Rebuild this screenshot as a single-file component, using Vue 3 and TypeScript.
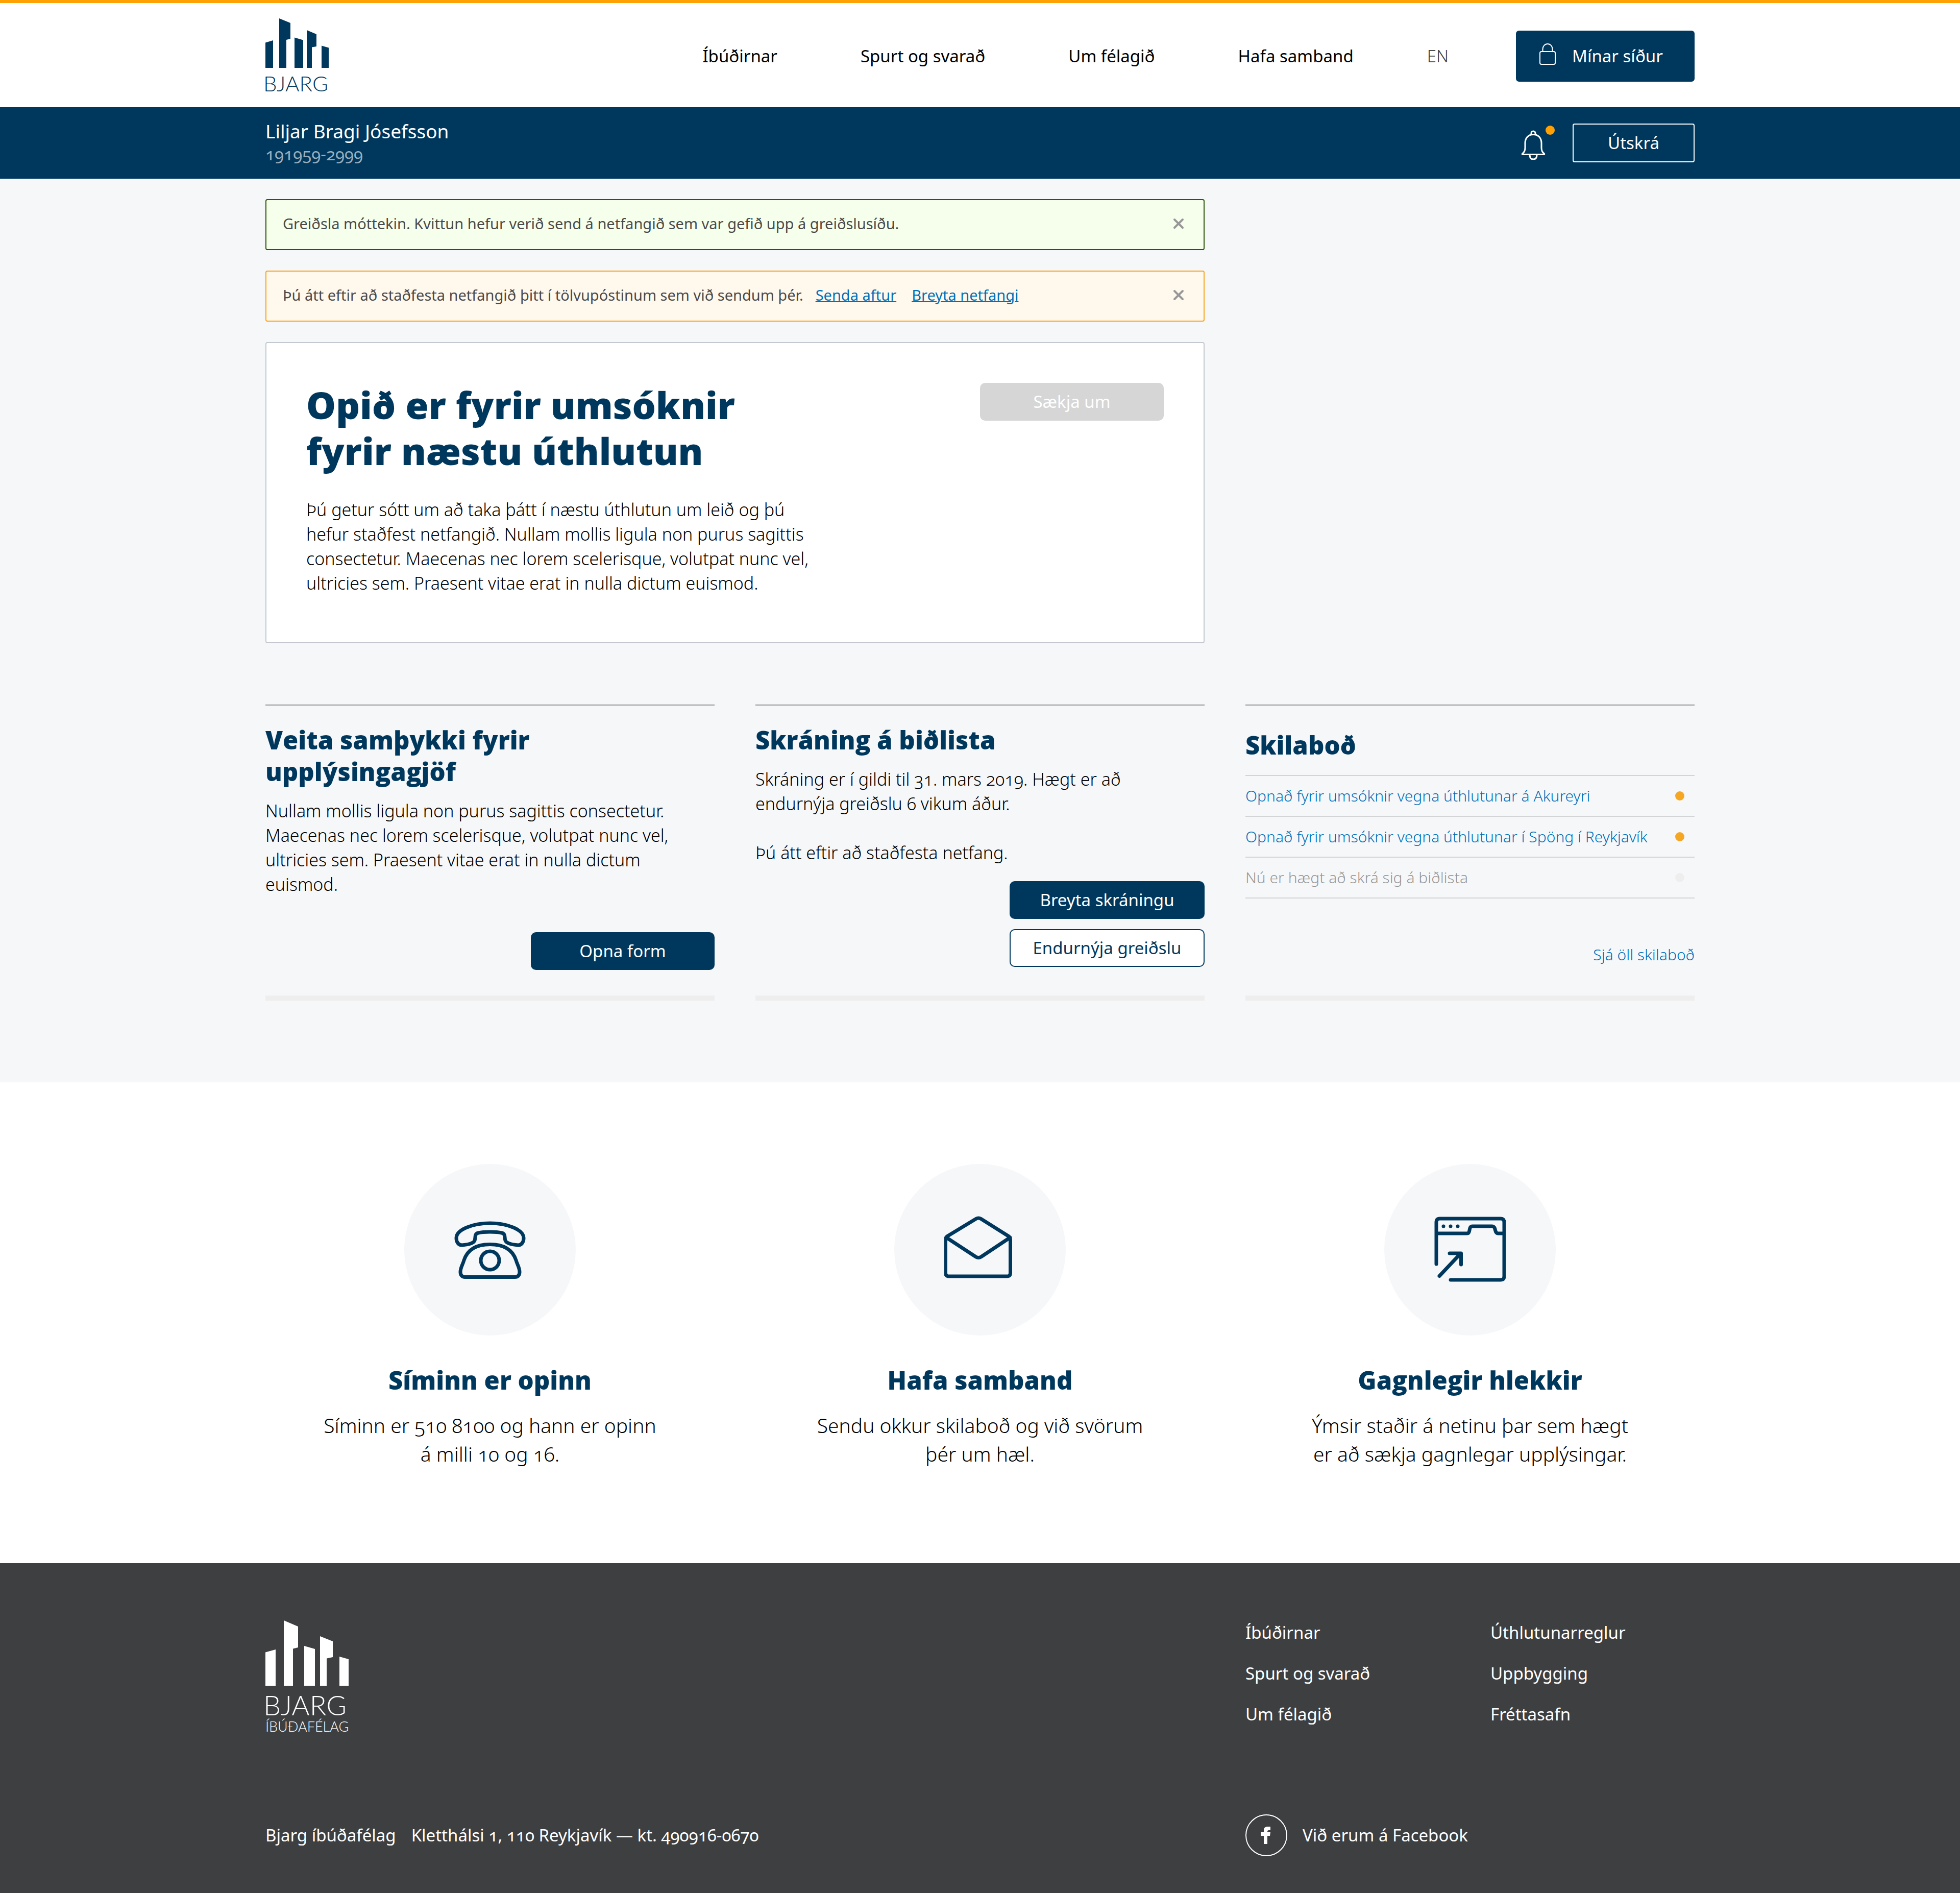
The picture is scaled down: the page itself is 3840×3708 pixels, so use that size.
<script setup lang="ts">
import { ref } from 'vue'

interface Message {
  text: string
  unread: boolean
}

const navLinks: string[] = ['Íbúðirnar', 'Spurt og svarað', 'Um félagið', 'Hafa samband']
const footerColumns: string[][] = [
  ['Íbúðirnar', 'Spurt og svarað', 'Um félagið'],
  ['Úthlutunarreglur', 'Uppbygging', 'Fréttasafn'],
]
const messages: Message[] = [
  { text: 'Opnað fyrir umsóknir vegna úthlutunar á Akureyri', unread: true },
  { text: 'Opnað fyrir umsóknir vegna úthlutunar í Spöng í Reykjavík', unread: true },
  { text: 'Nú er hægt að skrá sig á biðlista', unread: false },
]
const showReceipt = ref(true)
const showConfirm = ref(true)
</script>

<template>
  <div class="page">
    <header class="site-header">
      <div class="wrap header-row">
        <a href="#" class="logo">
          <svg class="logo-mark" viewBox="0 0 124 97" aria-hidden="true">
            <path d="M0 47.500 15 43v54H0zM27 0l22 9v31l-8 2v55H27zM57 37.500l17 5V97H57zM81 23l19 8v24l-9 1.500V97H81zM110 53.500l14 4V97h-14z" />
          </svg>
          <span class="logo-name">BJARG</span>
        </a>
        <nav class="main-nav">
          <a v-for="link in navLinks" :key="link" href="#">{{ link }}</a>
        </nav>
        <a href="#" class="lang">EN</a>
        <button type="button" class="my-pages">
          <svg class="lock" viewBox="0 0 32 42" aria-hidden="true">
            <path d="M6.500 16v-5a9.500 10 0 0 1 19 0v5" />
            <rect x="1" y="16" width="30" height="25" rx="3" />
          </svg>
          Mínar síður
        </button>
      </div>
    </header>

    <div class="user-bar">
      <div class="wrap user-row">
        <div class="user">
          <div class="user-name">Liljar Bragi Jósefsson</div>
          <div class="user-id">191959-2999</div>
        </div>
        <button type="button" class="bell" aria-label="Tilkynningar">
          <svg viewBox="0 0 48 58" aria-hidden="true">
            <path d="M20 9V6a4 4 0 0 1 8 0v3" />
            <path d="M24 8.500c-10 0-16 7-16 17v9c0 6-2 9-5 11-1 1-1 2 0 2h42c1 0 1-1 0-2-3-2-5-5-5-11v-9c0-10-6-17-16-17z" />
            <path d="M17 48c0 5 2 9 7 9s7-4 7-9" />
          </svg>
          <span class="bell-dot"></span>
        </button>
        <button type="button" class="logout">Útskrá</button>
      </div>
    </div>

    <main class="dashboard">
      <div class="wrap">
        <div class="lead">
          <div v-if="showReceipt" class="alert alert-success">
            <p>Greiðsla móttekin. Kvittun hefur verið send á netfangið sem var gefið upp á greiðslusíðu.</p>
            <button type="button" class="close" aria-label="Loka" @click="showReceipt = false">
              <svg viewBox="0 0 22 22" aria-hidden="true"><path d="M3 3l16 16M19 3L3 19" /></svg>
            </button>
          </div>
          <div v-if="showConfirm" class="alert alert-warning">
            <p>Þú átt eftir að staðfesta netfangið þitt í tölvupóstinum sem við sendum þér.</p>
            <a href="#">Senda aftur</a>
            <a href="#">Breyta netfangi</a>
            <button type="button" class="close" aria-label="Loka" @click="showConfirm = false">
              <svg viewBox="0 0 22 22" aria-hidden="true"><path d="M3 3l16 16M19 3L3 19" /></svg>
            </button>
          </div>
          <section class="apply">
            <div>
              <h1>Opið er fyrir umsóknir<br />fyrir næstu úthlutun</h1>
              <p>
                Þú getur sótt um að taka þátt í næstu úthlutun um leið og þú<br />
                hefur staðfest netfangið. Nullam mollis ligula non purus sagittis<br />
                consectetur. Maecenas nec lorem scelerisque, volutpat nunc vel,<br />
                ultricies sem. Praesent vitae erat in nulla dictum euismod.
              </p>
            </div>
            <button type="button" class="btn btn-disabled" disabled>Sækja um</button>
          </section>
        </div>

        <div class="columns">
          <section class="panel panel-form">
            <h2>Veita samþykki fyrir<br />upplýsingagjöf</h2>
            <p>
              Nullam mollis ligula non purus sagittis consectetur.<br />
              Maecenas nec lorem scelerisque, volutpat nunc vel,<br />
              ultricies sem. Praesent vitae erat in nulla dictum<br />
              euismod.
            </p>
            <div class="actions">
              <button type="button" class="btn">Opna form</button>
            </div>
          </section>
          <section class="panel">
            <h2>Skráning á biðlista</h2>
            <p>
              Skráning er í gildi til 31. mars 2019. Hægt er að<br />
              endurnýja greiðslu 6 vikum áður.<br />
              <br />
              Þú átt eftir að staðfesta netfang.
            </p>
            <div class="actions">
              <button type="button" class="btn btn-wide">Breyta skráningu</button>
              <button type="button" class="btn btn-wide btn-outline">Endurnýja greiðslu</button>
            </div>
          </section>
          <section class="panel panel-messages">
            <h2>Skilaboð</h2>
            <ul>
              <li v-for="message in messages" :key="message.text" :class="{ read: !message.unread }">
                <a href="#">{{ message.text }}</a>
                <span class="dot"></span>
              </li>
            </ul>
            <a href="#" class="all-messages">Sjá öll skilaboð</a>
          </section>
        </div>
      </div>
    </main>

    <section class="contact">
      <div class="wrap contact-grid">
        <div class="contact-item">
          <div class="circle">
            <svg viewBox="0 0 140 140" aria-hidden="true">
              <path d="M70 18c-35 0-66 13-66 29 0 9 5 14 11 14 13-1 23-4 25-9 2-6-1-13 7-15 6-1.500 15-2 23-2s17 .5 23 2c8 2 5 9 7 15 2 5 12 8 25 9 6 0 11-5 11-14 0-16-31-29-66-29z" />
              <path d="M70 59.500c-27 0-44 10-51 31-2 8-7 14-7 23 0 6 3 10 9 10h98c6 0 9-4 9-10 0-9-5-15-7-23-7-21-24-31-51-31z" />
              <circle cx="70" cy="91" r="18" />
            </svg>
          </div>
          <h3>Síminn er opinn</h3>
          <p>Síminn er 510 8100 og hann er opinn<br />á milli 10 og 16.</p>
        </div>
        <div class="contact-item">
          <div class="circle">
            <svg viewBox="0 0 140 140" aria-hidden="true">
              <path d="M6 43.500c-3 2-3.500 4-3.500 7V115c0 5 2 7 7 7h113c5 0 7-2 7-7V50.500c0-3-.5-5-3.500-7L72 9.500q-5-3-10 0zM4 46l58 38q5 3 10 0l57-38" />
            </svg>
          </div>
          <h3>Hafa samband</h3>
          <p>Sendu okkur skilaboð og við svörum<br />þér um hæl.</p>
        </div>
        <div class="contact-item">
          <div class="circle">
            <svg viewBox="0 0 140 140" aria-hidden="true">
              <path d="M4 98V16.500c0-5 2-7.500 7-7.500h119c5 0 7 2.500 7 7.500v105c0 5-2 7.500-7 7.500H32M4 38h60c8 0 2-14 11-14h38c9 0 4 14 12 14h12M10 121.500 51 78M30 77h22.500v22" />
              <g class="solid">
                <circle cx="18" cy="24" r="3.500" />
                <circle cx="32" cy="24" r="3.500" />
                <circle cx="46" cy="24" r="3.500" />
              </g>
            </svg>
          </div>
          <h3>Gagnlegir hlekkir</h3>
          <p>Ýmsir staðir á netinu þar sem hægt<br />er að sækja gagnlegar upplýsingar.</p>
        </div>
      </div>
    </section>

    <footer class="site-footer">
      <div class="wrap footer-grid">
        <a href="#" class="logo footer-logo">
          <svg class="logo-mark" viewBox="0 0 163 128" aria-hidden="true">
            <path d="M0 62.500 20 57v71H0zM36 0l28 12v41l-10 2.500V128H36zM76 50l21 6v72H76zM107 31l25 10v31l-12 2.500V128h-13zM145 71l18 5v52h-18z" />
          </svg>
          <span class="logo-name">BJARG</span>
          <span class="logo-sub">ÍBÚÐAFÉLAG</span>
        </a>
        <nav class="footer-nav">
          <ul v-for="(column, i) in footerColumns" :key="i">
            <li v-for="link in column" :key="link"><a href="#">{{ link }}</a></li>
          </ul>
        </nav>
        <address>
          <span>Bjarg íbúðafélag</span>
          <span>Kletthálsi 1, 110 Reykjavík — kt. 490916-0670</span>
        </address>
        <a href="#" class="facebook">
          <svg viewBox="0 0 82 82" aria-hidden="true">
            <circle cx="41" cy="41" r="40" />
            <path d="M36 58V42h-6v-7h6v-4c0-5 3-7 8-7h5v7h-3c-2 0-3 1-3 3v1h6l-1 7h-5v16z" />
          </svg>
          Við erum á Facebook
        </a>
      </div>
    </footer>
  </div>
</template>

<style>
body {
  margin: 0;
}
</style>

<style scoped>
.page {
  --navy: #00385d;
  --blue: #0071b9;
  --orange: #ffa005;
  --mist: #f6f7f9;
  font-family: "Noto Sans", "Open Sans", sans-serif;
  font-size: 33px;
  line-height: 48px;
  font-variant-numeric: oldstyle-nums;
  color: #000;
  background: #fff;
}

.wrap {
  width: min(2800px, calc(100% - 80px));
  margin: 0 auto;
}

h1,
h2,
h3,
p,
ul {
  margin: 0;
  padding: 0;
}

ul {
  list-style: none;
}

a {
  color: inherit;
  text-decoration: none;
}

button {
  font: inherit;
  cursor: pointer;
}

svg {
  display: block;
  flex: none;
}

/* Header */
.site-header {
  border-top: 6px solid var(--orange);
}

.header-row {
  display: flex;
  align-items: center;
  box-sizing: border-box;
  min-height: 204px;
  padding-top: 4px;
}

.logo {
  display: block;
  width: 124px;
  margin: 0 auto 0 0;
  color: var(--navy);
  font-family: Lato, sans-serif;
}

.logo-mark {
  width: 100%;
  fill: currentColor;
}

.logo-name {
  display: block;
  margin: 8px -4px 0;
  font-size: 42px;
  line-height: 44px;
  font-weight: 300;
}

.main-nav {
  display: flex;
  gap: 163px;
}

.lang {
  margin: 0 132px 0 144px;
  color: #3e3f41;
  font-weight: 300;
}

.my-pages {
  display: flex;
  align-items: center;
  box-sizing: border-box;
  width: 350px;
  height: 100px;
  padding: 0 46px;
  gap: 32px;
  border: 0;
  border-radius: 6px;
  background: var(--navy);
  color: #fff;
}

.lock {
  width: 32px;
  margin-bottom: 8px;
  overflow: visible;
  fill: none;
  stroke: currentColor;
  stroke-width: 2;
}

/* User bar */
.user-bar {
  background: var(--navy);
  color: #fff;
}

.user-row {
  display: flex;
  align-items: center;
  min-height: 140px;
}

.user {
  margin: 0 auto 4px 0;
}

.user-name {
  font-size: 37px;
}

.user-id {
  font-size: 33px;
  line-height: 42px;
  color: #99afbe;
}

.bell {
  position: relative;
  margin-right: 53px;
  padding: 0;
  border: 0;
  background: none;
  color: #fff;
}

.bell svg {
  width: 48px;
  margin-top: 8px;
  fill: none;
  stroke: currentColor;
  stroke-width: 3;
}

.bell-dot {
  position: absolute;
  top: -1px;
  right: -18px;
  width: 18px;
  height: 18px;
  border-radius: 50%;
  background: var(--orange);
}

.logout {
  box-sizing: border-box;
  width: 239px;
  height: 76px;
  padding: 0;
  border: 2px solid #fff;
  border-radius: 4px;
  background: none;
  color: #fff;
}

/* Dashboard */
.dashboard {
  padding: 40px 0 160px;
  background: var(--mist);
}

.lead {
  display: flex;
  flex-direction: column;
  gap: 40px;
  max-width: 1840px;
}

.alert {
  display: flex;
  align-items: center;
  gap: 30px;
  box-sizing: border-box;
  min-height: 100px;
  padding: 0 38px 4px 32px;
  border: 2px solid;
  border-radius: 4px;
  font-size: 29px;
  line-height: 40px;
}

.alert p {
  color: #4a4a4a;
}

.alert p + a {
  margin-left: -6px;
}

.alert-success {
  border-color: #2d5606;
  background: #f6ffeb;
}

.alert-warning {
  border-color: #f5a623;
  background: #fff8ed;
}

.alert a {
  color: var(--blue);
  text-decoration: underline;
  text-decoration-thickness: 2px;
}

.close {
  margin-left: auto;
  padding: 0;
  border: 0;
  background: none;
  color: #979797;
}

.close svg {
  width: 22px;
  fill: none;
  stroke: currentColor;
  stroke-width: 4;
  stroke-linecap: round;
}

.apply {
  display: flex;
  justify-content: space-between;
  align-items: flex-start;
  padding: 76px 78px 92px;
  border: 2px solid #c3c9cf;
  border-radius: 4px;
  background: #fff;
}

h1 {
  margin-bottom: 46px;
  font-family: "Open Sans", "Noto Sans", sans-serif;
  font-size: 73px;
  line-height: 90px;
  font-weight: 800;
  color: var(--navy);
}

.apply p,
.panel p {
  font-size: 34px;
  font-weight: 300;
}

.btn {
  box-sizing: border-box;
  width: 360px;
  height: 74px;
  padding: 0;
  border: 0;
  border-radius: 10px;
  background: var(--navy);
  color: #fff;
}

.btn-wide {
  width: 382px;
}

.btn-outline {
  border: 2px solid var(--navy);
  background: #fff;
  color: var(--navy);
}

.btn-disabled {
  margin-top: 2px;
  background: #d6d6d6;
  cursor: default;
}

.columns {
  display: grid;
  grid-template-columns: repeat(3, 1fr);
  gap: 80px;
  margin-top: 120px;
}

.panel {
  display: flex;
  flex-direction: column;
  padding: 36px 0 56px;
  border-top: 2px solid #97999b;
  border-bottom: 10px solid #eee;
}

.panel-form {
  padding-bottom: 50px;
}

.panel-messages {
  padding-top: 46px;
  padding-bottom: 60px;
}

h2,
h3 {
  font-family: "Open Sans", "Noto Sans", sans-serif;
  font-size: 49px;
  line-height: 62px;
  font-weight: 800;
  color: var(--navy);
}

h2 {
  margin-bottom: 22px;
}

.panel-messages h2 {
  margin-bottom: 28px;
}

.actions {
  display: flex;
  flex-direction: column;
  align-items: flex-end;
  gap: 20px;
  margin-top: auto;
  padding-top: 32px;
}

.panel-messages ul {
  border-top: 2px solid #d2d4d6;
}

.panel-messages li {
  display: flex;
  justify-content: space-between;
  align-items: center;
  height: 78px;
  padding-right: 20px;
  border-bottom: 2px solid #d2d4d6;
}

.panel-messages a {
  font-size: 30px;
  line-height: 40px;
  font-weight: 300;
  color: var(--blue);
}

.dot {
  width: 18px;
  height: 18px;
  border-radius: 50%;
  background: #f5a623;
}

.read .dot {
  background: #eee;
}

.panel-messages .read a {
  color: #979797;
}

.panel-messages .all-messages {
  align-self: flex-end;
  margin-top: auto;
}

/* Contact */
.contact {
  padding: 160px 0 186px;
}

.contact-grid {
  display: grid;
  grid-template-columns: repeat(3, 1fr);
  gap: 80px;
}

.contact-item {
  display: flex;
  flex-direction: column;
  align-items: center;
  text-align: center;
}

.circle {
  display: flex;
  align-items: center;
  justify-content: center;
  width: 336px;
  height: 336px;
  margin-bottom: 56px;
  border-radius: 50%;
  background: var(--mist);
}

.circle svg {
  width: 140px;
  fill: none;
  stroke: var(--navy);
  stroke-width: 7;
  stroke-linecap: round;
  stroke-linejoin: round;
}

.circle .solid {
  fill: var(--navy);
  stroke: none;
}

.contact-item p {
  margin-top: 30px;
  font-size: 39px;
  line-height: 56px;
  font-weight: 300;
}

/* Footer */
.site-footer {
  padding: 112px 0 73px;
  background: #3e3f41;
  color: #fff;
}

.footer-grid {
  display: grid;
  grid-template-columns: 1fr 880px;
  column-gap: 80px;
  row-gap: 154px;
}

.footer-logo {
  width: 163px;
  color: #fff;
}

.footer-logo .logo-name {
  margin-top: 8px;
  font-size: 54px;
  line-height: 60px;
}

.logo-sub {
  display: block;
  margin-top: -6px;
  font-size: 27px;
  line-height: 36px;
  font-weight: 300;
}

.footer-nav {
  display: grid;
  grid-template-columns: 1fr 1fr;
  gap: 80px;
}

.footer-nav ul {
  display: flex;
  flex-direction: column;
  gap: 32px;
}

address {
  display: flex;
  align-items: center;
  gap: 30px;
  font-style: normal;
}

.facebook {
  display: flex;
  align-items: center;
  justify-self: start;
  gap: 30px;
}

.facebook svg {
  width: 82px;
  fill: currentColor;
}

.facebook circle {
  fill: none;
  stroke: currentColor;
  stroke-width: 2;
}
</style>
